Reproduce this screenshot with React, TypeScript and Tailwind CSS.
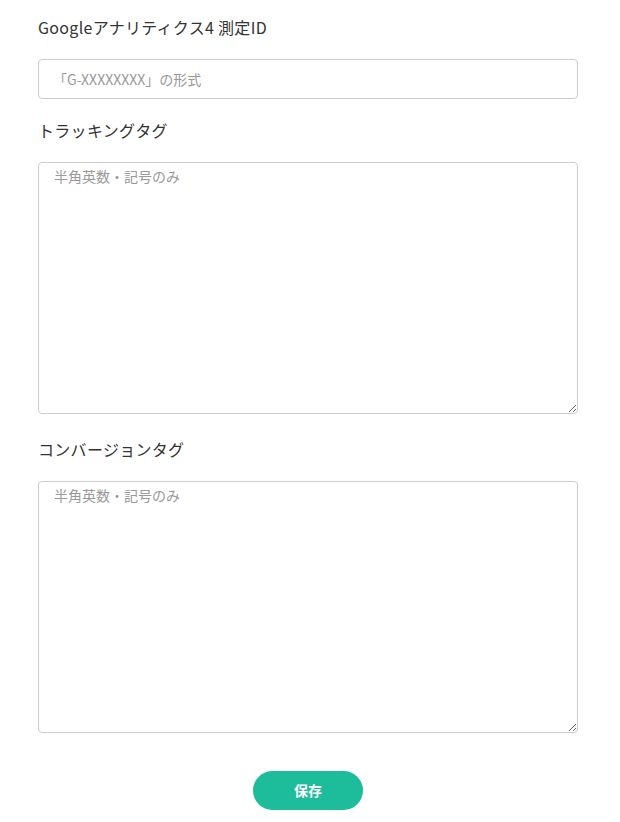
import React from "react";

const font = { fontFamily: '"Noto Sans CJK JP", "Noto Sans", sans-serif' };

export default function App() {
  return (
    <div className="w-[620px] min-h-[822px] bg-white" style={font}>
      <div className="px-[38px] pt-[15px] flex flex-col">
        <label className="block h-[24px] leading-[24px] text-[16px] tracking-[0.3px] text-[#333333]">
          Googleアナリティクス4 測定ID
        </label>
        <input
          className="mt-[20px] h-[40px] w-[540px] rounded-[4px] border border-[#cccccc] px-[14px] text-[14px] text-[#333] placeholder:text-[#999999] outline-none"
          placeholder="「G-XXXXXXXX」の形式"
          style={font}
        />
        <label className="mt-[19px] block h-[24px] leading-[24px] text-[16px] tracking-[0.3px] text-[#333333]">
          トラッキングタグ
        </label>
        <textarea
          className="mt-[20px] h-[252px] w-[540px] rounded-[4px] border border-[#cccccc] px-[15px] pt-[3px] pb-[7px] text-[14px] leading-[20px] text-[#333] placeholder:text-[#999999] outline-none"
          placeholder="半角英数・記号のみ"
          style={font}
        />
        <label className="mt-[23px] block h-[24px] leading-[24px] text-[16px] tracking-[0.3px] text-[#333333]">
          コンバージョンタグ
        </label>
        <textarea
          className="mt-[20px] h-[252px] w-[540px] rounded-[4px] border border-[#cccccc] px-[15px] pt-[3px] pb-[7px] text-[14px] leading-[20px] text-[#333] placeholder:text-[#999999] outline-none"
          placeholder="半角英数・記号のみ"
          style={font}
        />
        <div className="mt-[38px] flex justify-center pr-[4px]">
          <button
            className="h-[39px] w-[110px] rounded-full bg-[#1dbc9b] text-[14px] font-bold text-white"
            style={font}
          >
            保存
          </button>
        </div>
      </div>
    </div>
  );
}
